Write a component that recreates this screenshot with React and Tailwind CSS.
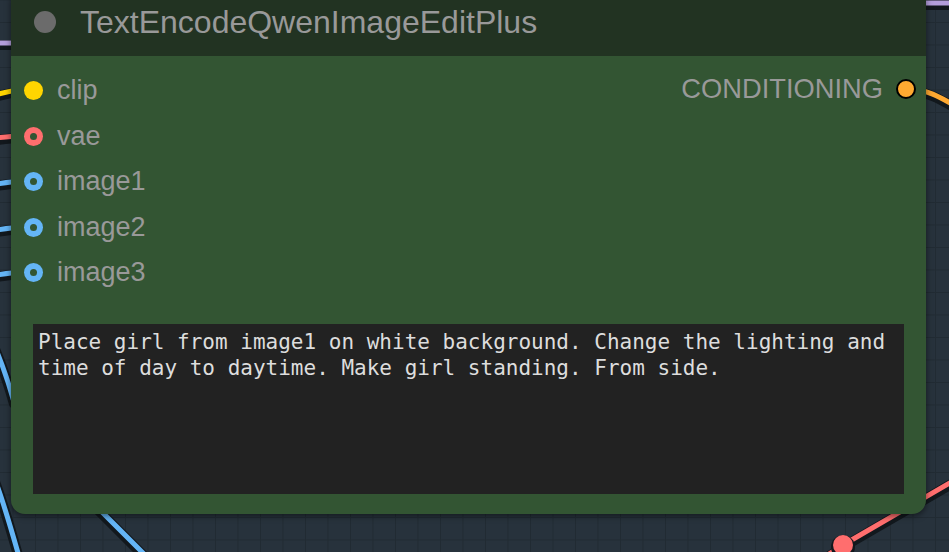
import React from "react";

function Wire({ d, color }) {
  return (
    <g fill="none" strokeLinecap="round">
      <path d={d} stroke="#12181d" strokeWidth="10" transform="translate(0,2)" />
      <path d={d} stroke={color} strokeWidth="5" />
    </g>
  );
}

function InputSlot({ label, color, hollow }) {
  return (
    <div className="flex h-[45.5px] items-center">
      <div className="ml-[12.5px] flex h-[19px] w-[19px] items-center justify-center rounded-full" style={{ backgroundColor: color }}>
        {hollow && <div className="h-[7px] w-[7px] rounded-full bg-[#335533]" />}
      </div>
      <span className="ml-[14.5px] text-[27px] leading-none text-[#999999]">{label}</span>
    </div>
  );
}

export default function App() {
  return (
    <div className="relative h-[552px] w-[949px] overflow-hidden bg-[#27323c] font-['Liberation_Sans',Arial,sans-serif]">
      <svg className="absolute inset-0" width="949" height="552">
        <defs>
          <pattern id="grid" width="22.5" height="22.5" patternUnits="userSpaceOnUse" x="12.5" y="-0.5">
            <path d="M0 0 H22.5 M0 0 V22.5" stroke="#212b33" strokeWidth="2" fill="none" />
          </pattern>
        </defs>
        <rect width="949" height="552" fill="url(#grid)" />
        <Wire d="M-20 43 L20 43" color="#b39ddb" />
        <Wire d="M900 3 L960 3" color="#b39ddb" />
        <Wire d="M-60 115 C-30 105 -5 92 20 90" color="#ffd500" />
        <Wire d="M-60 145 C-30 142 -5 137 20 136" color="#ff6e6e" />
        <Wire d="M-60 192 C-30 190 -5 183 20 181" color="#64b5f6" />
        <Wire d="M-60 238 C-30 236 -5 229 20 227" color="#64b5f6" />
        <Wire d="M-60 283 C-30 281 -5 274 20 272" color="#64b5f6" />
        <Wire d="M-30 300 C-10 330 5 370 14 402" color="#64b5f6" />
        <Wire d="M-5 480 C3 500 10 525 20 560" color="#64b5f6" />
        <Wire d="M80 490 C100 510 125 535 150 560" color="#64b5f6" />
        <Wire d="M900 88 C930 88 945 100 970 115" color="#ffa931" />
        <Wire d="M820 560 L843 545 L960 477" color="#ff6e6e" />
        <circle cx="843" cy="547" r="12" fill="#12181d" />
        <circle cx="843" cy="545" r="10" fill="#ff6e6e" />
      </svg>

      <div className="absolute left-[11px] top-[-12px] flex h-[526px] w-[915px] flex-col overflow-hidden rounded-[14px] bg-[#335533] shadow-[0_2px_6px_rgba(0,0,0,0.5)]">
        <div className="flex h-[68px] shrink-0 items-center bg-[#223322]">
          <div className="ml-[23px] h-[22px] w-[22px] rounded-full bg-[#6b6b6b]" />
          <span className="ml-[24px] text-[32px] leading-none text-[#999999]">TextEncodeQwenImageEditPlus</span>
        </div>
        <div className="flex flex-1 flex-col">
          <div className="relative mt-[12px] flex">
            <div className="flex flex-col">
              <InputSlot label="clip" color="#ffd500" />
              <InputSlot label="vae" color="#ff6e6e" hollow />
              <InputSlot label="image1" color="#64b5f6" hollow />
              <InputSlot label="image2" color="#64b5f6" hollow />
              <InputSlot label="image3" color="#64b5f6" hollow />
            </div>
            <div className="ml-auto mr-[10px] flex h-[41px] items-center">
              <span className="text-[27.3px] leading-none text-[#999999]">CONDITIONING</span>
              <div className="ml-[13px] h-[20px] w-[20px] rounded-full border-2 border-black bg-[#ffa931]" />
            </div>
          </div>
          <div className="mx-[22px] mb-[20px] mt-[28.5px] h-[170px] bg-[#222222] px-[5px] pt-[5px] font-['DejaVu_Sans_Mono',monospace] text-[21px] leading-[26px] text-[#dddddd]">
            <div>Place girl from image1 on white background. Change the lighting and</div>
            <div>time of day to daytime. Make girl standing. From side.</div>
          </div>
        </div>
      </div>
    </div>
  );
}
